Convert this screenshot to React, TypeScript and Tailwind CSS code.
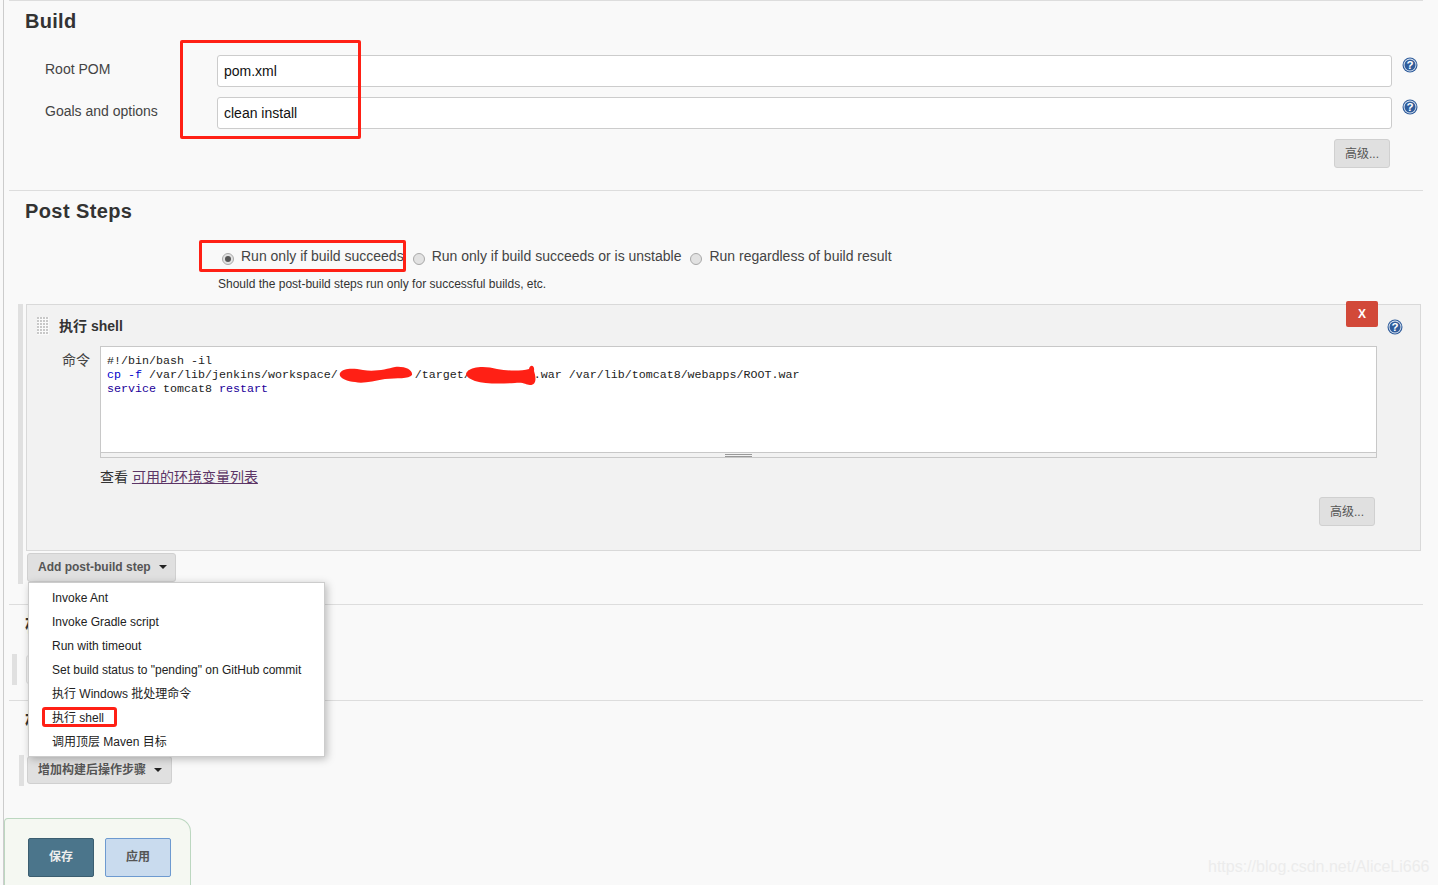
import React from 'react';

const menuItems = [
    'Invoke Ant',
    'Invoke Gradle script',
    'Run with timeout',
    'Set build status to "pending" on GitHub commit',
    '执行 Windows 批处理命令',
    '执行 shell',
    '调用顶层 Maven 目标',
];

function HelpIcon() {
    return (
        <svg width="16" height="16" viewBox="0 0 16 16" className="block">
            <circle cx="8" cy="8" r="7.5" fill="#2f5c9b" />
            <circle cx="8" cy="8" r="6.4" fill="#dfe8f4" />
            <circle cx="8" cy="8" r="5.5" fill="#2f5c9b" />
            <text x="8" y="12" textAnchor="middle" fontSize="11.5" fontWeight="700" fill="#fff" fontFamily="Liberation Sans">?</text>
        </svg>
    );
}

function Radio({ checked }: { checked?: boolean }) {
    return (
        <span className="flex h-[12px] w-[12px] shrink-0 items-center justify-center rounded-full border border-[#a9a9a9] bg-[#e2e2e2]">
            {checked && <span className="h-[6px] w-[6px] rounded-full bg-[#555]" />}
        </span>
    );
}

function AdvancedButton() {
    return (
        <button className="flex h-[29px] w-[56px] items-center justify-center rounded-[3px] border border-[#d0d0d0] bg-[#e0e0e0] text-[12px] text-[#555]">
            高级...
        </button>
    );
}

function Caret() {
    return <span className="h-0 w-0 border-x-[4px] border-t-[4px] border-x-transparent border-t-[#222]" />;
}

function FieldRow({ label, value }: { label: string; value: string }) {
    return (
        <div className="flex h-[32px]">
            <div className="w-[172px] pt-[5px] text-[14px] leading-[18px] text-[#444]">{label}</div>
            <div className="flex h-[32px] flex-1 items-center rounded-[3px] border border-[#ccc] bg-white pl-[6px] pt-[1px] text-[14px] text-[#111]">
                {value}
            </div>
            <div className="w-[31px] pl-[10px] pt-[2px]">
                <HelpIcon />
            </div>
        </div>
    );
}

export default function App() {
    return (
        <div className="relative h-[885px] overflow-hidden bg-[#f9f9f9] font-['Liberation_Sans','Noto_Sans_CJK_SC',sans-serif]">
            <div className="ml-[3px] h-full border-l border-[#ccc] pl-[5px] pr-[15px]">
                {/* Build */}
                <section className="h-[190px] border-t border-[#ddd] pl-[36px]">
                    <h2 className="-ml-[20px] mt-[8px] h-[24px] text-[20px] font-bold leading-[24px] tracking-[0.3px] text-[#333]">Build</h2>
                    <div className="mt-[22px] flex flex-col gap-[10px]">
                        <FieldRow label="Root POM" value="pom.xml" />
                        <FieldRow label="Goals and options" value="clean install" />
                    </div>
                    <div className="mr-[33px] mt-[10px] flex justify-end">
                        <AdvancedButton />
                    </div>
                </section>

                {/* Post Steps */}
                <section className="border-t border-[#ddd]">
                    <h2 className="ml-[16px] mt-[8px] h-[24px] text-[20px] font-bold leading-[24px] tracking-[0.4px] text-[#333]">Post Steps</h2>
                    <div className="ml-[213px] mt-[23px] flex h-[20px] items-center text-[14px] text-[#444]">
                        <span className="mt-[5px]"><Radio checked /></span>
                        <span className="ml-[7px]">Run only if build succeeds</span>
                        <span className="ml-[9px] mt-[6px]"><Radio /></span>
                        <span className="ml-[7px]">Run only if build succeeds or is unstable</span>
                        <span className="ml-[9px] mt-[6px]"><Radio /></span>
                        <span className="ml-[7px]">Run regardless of build result</span>
                    </div>
                    <div className="ml-[209px] mt-[10px] h-[16px] text-[12px] leading-[16px] text-[#333]">
                        Should the post-build steps run only for successful builds, etc.
                    </div>

                    {/* 执行 shell */}
                    <div className="relative ml-[9px] mt-[12px] h-[280px] border-l-[5px] border-[#e0e0e0] pl-[3px]">
                        <div className="relative mr-[2px] h-[247px] border border-[#d9d9d9] bg-[#f2f2f2]">
                            <button className="absolute right-[42px] top-[-4px] flex h-[26px] w-[32px] items-center justify-center rounded-[2px] bg-[#d24939] text-[12px] font-bold text-white">
                                X
                            </button>
                            <div className="absolute right-[17px] top-[14px]">
                                <HelpIcon />
                            </div>
                            <div className="flex h-[41px] items-center gap-[10px] pl-[10px] pt-[1px]">
                                <svg width="12" height="18" className="block bg-[#fafafa]">
                                    <defs>
                                        <pattern id="grip" width="3" height="3" patternUnits="userSpaceOnUse">
                                            <rect width="2" height="2" fill="#c8c8c8" />
                                        </pattern>
                                    </defs>
                                    <rect width="12" height="18" fill="url(#grip)" />
                                </svg>
                                <span className="text-[14px] font-bold text-[#333]">执行 shell</span>
                            </div>
                            <div className="flex">
                                <div className="w-[73px] pr-[10px] pt-[5px] text-right text-[14px] leading-[18px] text-[#444]">命令</div>
                                <div className="relative h-[112px] flex-1 border border-[#c8c8c8] bg-white">
                                    <pre className="pl-[6px] pt-[7px] font-['Liberation_Mono',monospace] text-[11.67px] leading-[14px] text-[#222]">
                                        <span>#!/bin/bash -il</span>
                                        {'\n'}
                                        <span className="text-[#0000cc]">cp -f</span> /var/lib/jenkins/workspace/<span className="text-transparent">xxxxxxxxxxx</span>/target/<span className="text-transparent">xxxxxxxxx</span>.war /var/lib/tomcat8/webapps/ROOT.war
                                        {'\n'}
                                        <span className="text-[#220099]">service</span> tomcat8 <span className="text-[#220099]">restart</span>
                                    </pre>
                                    <svg className="absolute left-[238px] top-[17px]" width="200" height="24" viewBox="0 0 200 24">
                                        <path d="M1 9 C4 4 14 4 24 6 C36 8 48 5 56 3 C66 2 74 6 73 11 C70 15 58 14 46 15 C34 17 24 20 16 18 C8 17 -1 14 1 9 Z" fill="#ff2015" />
                                        <path d="M129 7 C134 2 148 2 158 5 C170 7 182 7 190 5 C191 0 196 1 195 7 C197 13 198 21 191 21 C186 21 186 18 176 19 C160 20 146 20 136 17 C130 15 124 11 129 7 Z" fill="#ff2015" />
                                    </svg>
                                    <div className="absolute inset-x-0 bottom-0 flex h-[5px] justify-center border-t border-[#c8c8c8] bg-[#f2f2f2]">
                                        <span className="mt-[1px] h-[3px] w-[27px] border-y border-[#999]" />
                                    </div>
                                </div>
                                <div className="w-[43px]" />
                            </div>
                            <div className="ml-[73px] mt-[9px] h-[20px] text-[14px] leading-[20px] text-[#333]">
                                查看 <a className="text-[#5c3566] underline">可用的环境变量列表</a>
                            </div>
                            <div className="mr-[45px] mt-[10px] flex justify-end">
                                <AdvancedButton />
                            </div>
                        </div>
                        <button className="ml-[1px] mt-[2px] flex h-[29px] w-[149px] items-center gap-[8px] rounded-[3px] border border-[#d0d0d0] bg-[#e0e0e0] pb-[1px] pl-[10px] text-[12px] font-bold text-[#555]">
                            Add post-build step <Caret />
                        </button>

                        {/* step menu */}
                        <div className="absolute left-[5px] top-[278px] z-10 h-[175px] w-[297px] border border-[#ccc] bg-white py-[3px] pl-[23px] text-[12px] text-[#222] shadow-[2px_2px_8px_rgba(0,0,0,0.25)]">
                            {menuItems.map((item) => (
                                <div key={item} className="flex h-[24px] items-center">{item}</div>
                            ))}
                        </div>
                    </div>
                </section>

                {/* hidden by the menu */}
                <section className="mt-[20px] h-[96px] border-t border-[#ddd]">
                    <h2 className="ml-[16px] mt-[8px] h-[24px] text-[20px] font-bold leading-[24px] text-[#333]">构建设置</h2>
                    <div className="ml-[3px] mt-[17px] h-[31px] border-l-[5px] border-[#e0e0e0] pl-[9px] pt-px">
                        <div className="h-[29px] w-[100px] rounded-[3px] border border-[#ddd] bg-[#f2f2f2]" />
                    </div>
                </section>
                <section className="border-t border-[#ddd]">
                    <h2 className="ml-[16px] mt-[8px] h-[24px] text-[20px] font-bold leading-[24px] text-[#333]">构建后操作</h2>
                    <div className="ml-[10px] mt-[22px] h-[31px] border-l-[5px] border-[#e0e0e0] pl-[3px] pt-px">
                        <button className="flex h-[28px] w-[145px] items-center gap-[8px] rounded-[3px] border border-[#d0d0d0] bg-[#e0e0e0] pl-[10px] text-[12px] font-bold text-[#555]">
                            增加构建后操作步骤 <Caret />
                        </button>
                    </div>
                </section>
            </div>

            {/* sticky save bar */}
            <div className="absolute bottom-0 left-[4px] flex h-[67px] w-[187px] gap-[11px] rounded-tl-[4px] rounded-tr-[14px] border-x border-t border-[#bcd7c0] bg-[#f5f8f2] pl-[23px] pt-[19px]">
                <button className="h-[39px] w-[66px] rounded-[2px] border border-[#3b5e70] bg-[#4b758b] pb-[2px] text-[12px] font-bold text-[#eee]">保存</button>
                <button className="h-[39px] w-[66px] rounded-[2px] border border-[#6d9ad0] bg-[#c9dbee] pb-[2px] text-[12px] font-bold text-[#555]">应用</button>
            </div>

            {/* annotations */}
            <div className="absolute left-[180px] top-[40px] h-[99px] w-[181px] rounded-[2px] border-[3px] border-[#ff2015]" />
            <div className="absolute left-[199px] top-[240px] h-[32px] w-[207px] rounded-[2px] border-[3px] border-[#ff2015]" />
            <div className="absolute left-[42px] top-[707px] z-20 h-[20px] w-[75px] rounded-[3px] border-[3px] border-[#ff2015]" />

            <div className="absolute left-[1208px] top-[858px] text-[16px] leading-[18px] text-[#ececec]">https://blog.csdn.net/AliceLi666</div>
        </div>
    );
}
